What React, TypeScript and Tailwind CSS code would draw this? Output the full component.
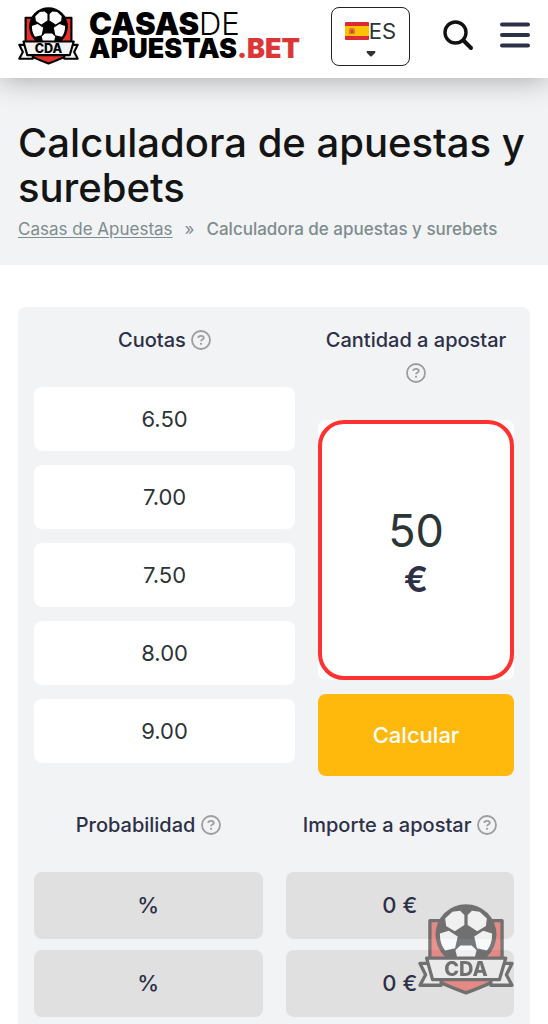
/**
 * App.tsx
 *
 * Betting calculator page: site header, page title with breadcrumb,
 * and the odds / stake form with its results grid.
 */

import { clsx } from "clsx";

const odds = ["6.50", "7.00", "7.50", "8.00", "9.00"];

const results = [
  { probability: "%", stake: "0 €" },
  { probability: "%", stake: "0 €" },
];

/** Shield with football and ribbon, shared by the header and the floating badge */
function Emblem({ className }: { className?: string }) {
  return (
    <svg viewBox="54 42 290 274" className={className} aria-hidden="true">
      <g stroke="#000" strokeWidth="10" strokeLinejoin="round">
        <path d="M90 92H308V262Q270 284 199 310Q128 284 90 262Z" fill="#e5322d" />
        <path d="M60 221H98L124 270V287H60L77 255Z" fill="#f4f4f4" />
        <path d="M338 221H300L274 270V287H338L321 255Z" fill="#f4f4f4" />
      </g>
      <circle cx="199" cy="134" r="92" fill="#000" />
      <g fill="#fff">
        <path d="M158 65L181 62L194 75V105L165 124L139 108L136 85Z" />
        <path d="M240 65L217 62L204 75V105L233 124L259 108L262 85Z" />
        <path d="M120 131L147 122L174 140L166 175L136 182Q120 165 120 131Z" />
        <path d="M278 131L251 122L224 140L232 175L262 182Q278 165 278 131Z" />
        <path d="M182 167H216L231 181L225 205H173L167 181Z" />
      </g>
      <path
        d="M80 205H319L300 270H98Z"
        fill="#f4f4f4"
        stroke="#000"
        strokeWidth="10"
        strokeLinejoin="round"
      />
      <text
        x="199"
        y="258"
        textAnchor="middle"
        fontFamily="Inter, sans-serif"
        fontSize="60"
        fontWeight="800"
      >
        CDA
      </text>
    </svg>
  );
}

function SpainFlag() {
  return (
    <svg viewBox="0 0 24 18" className="h-[18px] w-6" aria-hidden="true">
      <rect width="24" height="18" rx="1" fill="#dd2b35" />
      <rect y="4" width="24" height="10" fill="#fcc400" />
      <path d="M4 7h1V6h4v1h1v5H4Z" fill="#e0762f" />
      <path d="M6 8h2v3H6Z" fill="#c9344a" />
    </svg>
  );
}

function HelpIcon() {
  return (
    <button type="button" aria-label="Ayuda" className="inline-block size-5 align-[-3px]">
      <svg viewBox="0 0 20 20" className="size-5" fill="none" stroke="#9d9d9d">
        <circle cx="10" cy="10" r="9" strokeWidth="1.8" />
        <path
          d="M7.2 7.8C7.5 5.2 12.8 5.2 12.8 7.9C12.8 9.6 10 9.4 10 11.3"
          strokeWidth="1.8"
        />
        <circle cx="10" cy="13.8" r="1.1" fill="#9d9d9d" stroke="none" />
      </svg>
    </button>
  );
}

function ColumnTitle({ text }: { text: string }) {
  return (
    <h2 className="mb-[30px] text-center text-xl leading-[33px] font-medium">
      {text} <HelpIcon />
    </h2>
  );
}

function Header() {
  return (
    <header className="relative z-10 flex h-[78px] items-center bg-white px-[18px] shadow-[0_0_30px_rgba(0,0,0,0.35)]">
      <a href="#" className="flex items-center gap-2.5 pb-1.5 text-black">
        <Emblem className="h-[58px] w-[61px] shrink-0" />
        <span className="flex flex-col whitespace-nowrap">
          <span className="text-[31px] leading-[25px] font-black">
            CASAS<span className="font-light">DE</span>
          </span>
          <span className="text-[27px] leading-[25px] font-black">
            APUESTAS<span className="text-[#dc3737]">.BET</span>
          </span>
        </span>
      </a>

      <button
        type="button"
        aria-label="Idioma: ES"
        className="mb-1.5 ml-auto flex h-[59px] w-[79px] shrink-0 flex-col items-center rounded-lg border border-[#222] pt-[7px]"
      >
        <span className="flex items-center text-[22px] leading-8 text-[#2d3436]">
          <SpainFlag />
          ES
        </span>
        <svg viewBox="0 0 10 6" className="mt-1 h-1.5 w-2.5" fill="#2d3436" aria-hidden="true">
          <path d="M1 0H9Q10 1 9 2L6 5Q5 6 4 5L1 2Q0 1 1 0Z" />
        </svg>
      </button>

      <button type="button" aria-label="Buscar" className="mb-2 ml-8 shrink-0">
        <svg viewBox="0 0 32 32" className="size-8" fill="none" stroke="#111" strokeLinecap="round">
          <circle cx="13.5" cy="13.5" r="10.5" strokeWidth="3.4" />
          <path d="M21.5 21.5L29 29" strokeWidth="4" />
        </svg>
      </button>

      <button type="button" aria-label="Menú" className="mb-2 ml-[26px] shrink-0">
        <svg viewBox="0 0 30 26" className="h-[26px] w-[30px]" stroke="#2d3047" strokeWidth="4" strokeLinecap="round">
          <path d="M2 2.5H28M2 13H28M2 23.5H28" />
        </svg>
      </button>
    </header>
  );
}

export default function App() {
  return (
    <div className="flex min-h-screen flex-col bg-white font-['Inter',sans-serif] text-[#2d3047]">
      <Header />

      {/* ── Title and breadcrumb ── */}
      <section className="bg-[#f1f3f5] px-[18px] pt-[42px] pb-6">
        <h1 className="text-[40px] leading-[45px] font-medium text-[#141414]">
          Calculadora de apuestas y surebets
        </h1>
        <nav className="flex gap-3 pt-[7px] text-[17px] leading-6 text-[#7f8c8d]">
          <a href="#" className="underline underline-offset-2">
            Casas de Apuestas
          </a>
          <span>»</span>
          <span className="font-medium">Calculadora de apuestas y surebets</span>
        </nav>
      </section>

      {/* ── Calculator ── */}
      <main className="mx-[18px] mt-[42px] flex-1 rounded-t-lg bg-[#f1f3f5] px-4 pt-[17px]">
        <form className="grid grid-cols-[4fr_3fr] gap-x-[23px]">
          <div>
            <ColumnTitle text="Cuotas" />
            <div className="flex flex-col gap-3.5">
              {odds.map((odd, i) => (
                <input
                  key={odd}
                  type="text"
                  defaultValue={odd}
                  aria-label={`Cuota ${i + 1}`}
                  className="h-16 w-full rounded-lg bg-white text-center text-[22px] text-[#2d3436]"
                />
              ))}
            </div>
          </div>

          <div>
            <ColumnTitle text="Cantidad a apostar" />
            <div className="rounded-lg bg-white">
              <label className="flex h-[260px] flex-col items-center justify-center rounded-[26px] border-4 border-[#ff3131] pt-2.5">
                <input
                  type="text"
                  defaultValue="50"
                  aria-label="Cantidad a apostar"
                  className="h-12 w-full text-center text-[45px] leading-12 text-[#2d3436]"
                />
                <span className="text-4xl leading-12 font-semibold">€</span>
              </label>
            </div>
            <button
              type="button"
              className="mt-3.5 h-[82px] w-full rounded-lg bg-[#ffb80c] text-[22px] font-medium text-white"
            >
              Calcular
            </button>
          </div>
        </form>

        {/* ── Results ── */}
        <div className="grid grid-cols-2 gap-x-[23px] pt-[33px]">
          <ColumnTitle text="Probabilidad" />
          <ColumnTitle text="Importe a apostar" />
          {results.map((row, i) => {
            const cell = clsx(
              "flex h-[67px] items-center justify-center rounded-lg bg-[#e0e0e0] text-[22px] font-medium",
              i > 0 && "mt-[11px]"
            );
            return (
              <div key={i} className="contents">
                <output className={cell}>{row.probability}</output>
                <output className={cell}>{row.stake}</output>
              </div>
            );
          })}
        </div>
      </main>

      {/* Floating brand badge */}
      <Emblem className="fixed right-[34px] bottom-[29px] z-20 h-[91px] w-24 opacity-50" />
    </div>
  );
}
